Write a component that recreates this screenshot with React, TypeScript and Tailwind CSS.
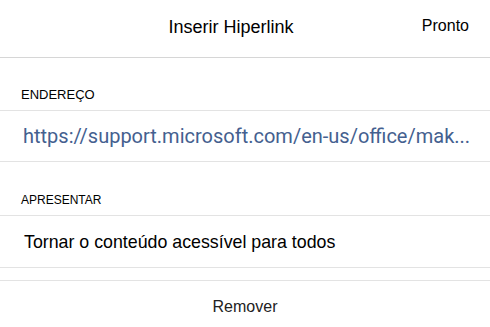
export default function App() {
  return (
    <div className="flex h-[327px] w-[490px] flex-col overflow-hidden bg-white font-['Liberation_Sans',Arial,sans-serif] text-black">
      {/* header */}
      <div className="relative flex h-[58px] shrink-0 items-center justify-center border-b border-[#d6d6d6] pb-[4px] pr-[28px]">
        <span className="text-[18px] leading-6">Inserir Hiperlink</span>
        <span className="absolute right-[21px] top-[16px] text-[16px] leading-5">Pronto</span>
      </div>

      <div className="flex h-[53px] shrink-0 items-end border-b border-[#e3e3e3] px-[21px] pb-[7px]">
        <span className="text-[13px] leading-4">ENDEREÇO</span>
      </div>
      <div className="flex h-[51px] shrink-0 items-center overflow-hidden border-b border-[#e3e3e3] pl-[23px]">
        <span className="whitespace-nowrap font-['Roboto',sans-serif] text-[20px] leading-6 text-[#44608f]">
          https://support.microsoft.com/en-us/office/mak...
        </span>
      </div>

      <div className="flex h-[54px] shrink-0 items-end border-b border-[#e3e3e3] px-[21px] pb-[7px]">
        <span className="text-[12px] leading-4">APRESENTAR</span>
      </div>
      <div className="flex h-[52px] shrink-0 items-center border-b border-[#e3e3e3] px-[24px] pt-[1px]">
        <span className="text-[17.8px] leading-6">Tornar o conteúdo acessível para todos</span>
      </div>

      <div className="h-[13px] shrink-0 border-b border-[#e3e3e3]" />
      <div className="flex flex-1 items-center justify-center pt-[5px]">
        <span className="text-[16px] leading-5 text-[#222]">Remover</span>
      </div>
    </div>
  );
}
